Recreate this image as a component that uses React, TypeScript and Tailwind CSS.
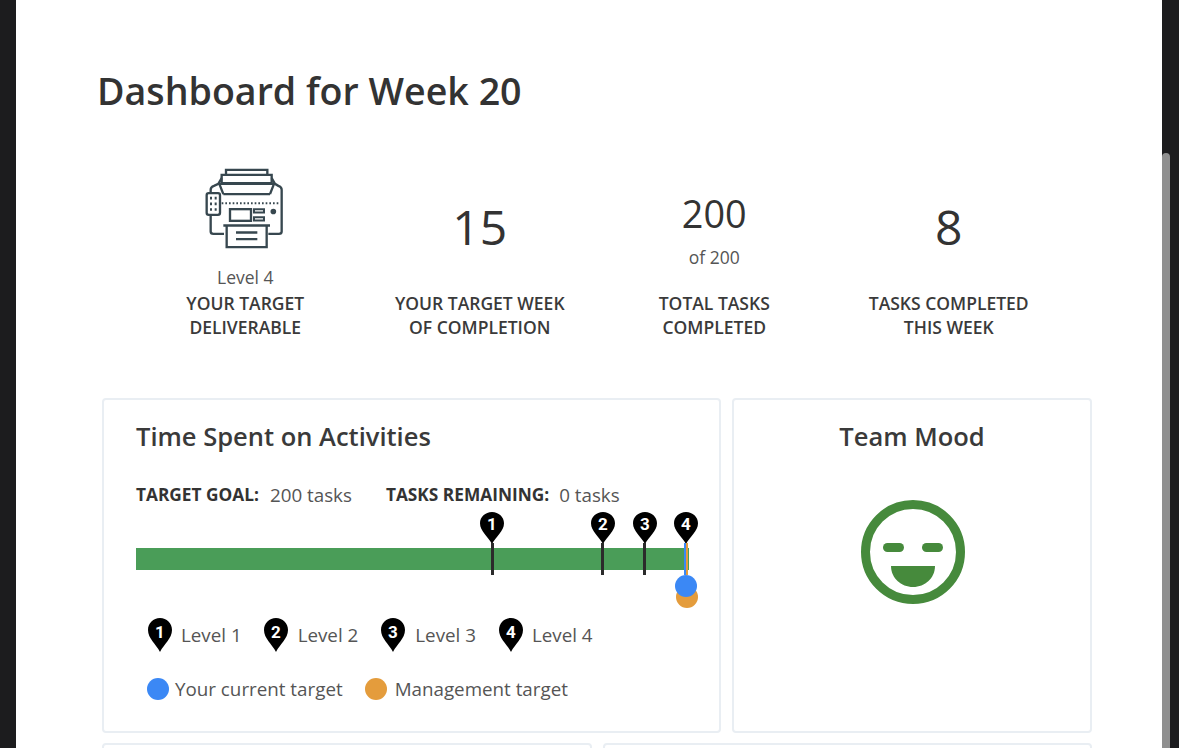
import React from 'react';

const Pin = ({ n, className = 'w-6 h-[34px]' }: { n: number; className?: string }) => (
  <svg viewBox="0 0 24 34" preserveAspectRatio="none" className={className}>
    <path d="M12 0C5.300 0 0 5.300 0 12c0 8.500 8 14 12 22 4-8 12-13.500 12-22C24 5.300 18.700 0 12 0z" fill="#000" />
    <text x="12" y="19.500" textAnchor="middle" fill="#fff" fontSize="17" fontWeight="700" fontFamily="Roboto">{n}</text>
  </svg>
);

const PrinterIcon = () => (
  <svg viewBox="45 25 240 245" className="w-[80px] h-[82px]" fill="none" stroke="#37474f" strokeWidth="7">
    <path d="M108 30h124v15H108zM95 45h150v25H95z" />
    <path d="M85 72h170M100 103h140M88 72l12 31M252 72l-12 31" />
    <path d="M95 55L85 72 72 78q-10 3-10 12v10M62 165v50q0 7 8 7h32" />
    <path d="M245 55l10 17 10 6q10 3 10 12v125q0 7-8 7h-32" />
    <rect x="50" y="100" width="40" height="65" rx="6" fill="#fff" />
    <path d="M60 115h6M74 115h6M60 132h6M74 132h6M60 149h6M74 149h6" strokeWidth="8" />
    <path d="M95 130h175" strokeDasharray="5 6" strokeWidth="6" />
    <rect x="120" y="148" width="63" height="35" />
    <path d="M192 148h30v10h-30zM192 172h30v10h-30z" strokeWidth="6" />
    <circle cx="250" cy="155" r="5" fill="#37474f" />
    <path d="M100 197h140M110 197v65h120v-65M138 218h64M138 238h64" />
  </svg>
);

const Stat = ({ top, line1, line2 }: { top: React.ReactNode; line1: string; line2: string }) => (
  <div className="flex flex-col items-center">
    <div className="h-[142px] flex flex-col items-center justify-end">{top}</div>
    <div className="mt-[2px] text-[17.500px] leading-6 font-semibold text-[#3a3a3a] text-center">
      <div>{line1}</div>
      <div>{line2}</div>
    </div>
  </div>
);

const App: React.FC = () => {
  return (
    <div className="h-[748px] w-[1179px] overflow-hidden bg-[#1c1c1e] flex font-['Open_Sans',sans-serif]">
      <div className="ml-4 w-[1146px] h-[748px] bg-white pl-[82px] pt-[65px] text-[#333]">
        <h1 className="-ml-px text-[37.600px] leading-[52px] font-semibold text-[#333]">Dashboard for Week 20</h1>

        <div className="ml-[30px] mt-[30px] grid grid-cols-[234.500px_234.500px_234.500px_234.500px]">
          <Stat
            top={
              <>
                <PrinterIcon />
                <div className="mt-[15px] text-[17.500px] leading-6 text-[#555]">Level 4</div>
              </>
            }
            line1="YOUR TARGET"
            line2="DELIVERABLE"
          />
          <Stat
            top={<div className="text-[48px] leading-[66px] mb-[29px] text-[#333]">15</div>}
            line1="YOUR TARGET WEEK"
            line2="OF COMPLETION"
          />
          <Stat
            top={
              <div className="mb-[20px] flex flex-col items-center">
                <div className="text-[37.800px] leading-[50px] text-[#333]">200</div>
                <div className="mt-[6px] text-[17.500px] leading-6 text-[#555]">of 200</div>
              </div>
            }
            line1="TOTAL TASKS"
            line2="COMPLETED"
          />
          <Stat
            top={<div className="text-[48px] leading-[66px] mb-[29px] text-[#333]">8</div>}
            line1="TASKS COMPLETED"
            line2="THIS WEEK"
          />
        </div>

        <div className="mt-[59px] ml-1 flex gap-[11px]">
          <div className="w-[619px] h-[335px] shrink-0 rounded border-2 border-[#e9eef3] pl-[32px] pt-[19px]">
            <h2 className="text-[25.500px] leading-[34px] font-semibold text-[#3a3a3a]">Time Spent on Activities</h2>
            <div className="mt-[29px] flex text-[18.800px] leading-[26px] text-[#555]">
              <span className="font-bold text-[17.300px] text-[#333] mr-[11px]">TARGET GOAL:</span>
              <span className="mr-[34px]">200 tasks</span>
              <span className="font-bold text-[17.300px] text-[#333] mr-[10px]">TASKS REMAINING:</span>
              <span>0 tasks</span>
            </div>
            <div className="relative mt-[40px] h-[22px] w-[553px] bg-[#4a9d58]">
              <div className="absolute left-[344px] top-[-36px]"><Pin n={1} className="w-6 h-[32px]" /></div>
              <div className="absolute left-[355px] top-[-5px] h-[32px] w-[2.500px] bg-[#2b2b2b]" />
              <div className="absolute left-[454.500px] top-[-36px]"><Pin n={2} className="w-6 h-[32px]" /></div>
              <div className="absolute left-[465px] top-[-5px] h-[32px] w-[2.500px] bg-[#2b2b2b]" />
              <div className="absolute left-[496.500px] top-[-36px]"><Pin n={3} className="w-6 h-[32px]" /></div>
              <div className="absolute left-[507px] top-[-5px] h-[32px] w-[2.500px] bg-[#2b2b2b]" />
              <div className="absolute left-[538px] top-[-36px]"><Pin n={4} className="w-6 h-[32px]" /></div>
              <div className="absolute left-[548px] top-[-5px] h-[32px] w-[1.500px] bg-[#3b88f5]" />
              <div className="absolute left-[549.500px] top-[-5px] h-[32px] w-[2.500px] bg-[#e49c3c]" />
              <div className="absolute left-[540px] top-[38px] h-[22px] w-[22px] rounded-full bg-[#e49c3c]" />
              <div className="absolute left-[539px] top-[27px] h-[22px] w-[22px] rounded-full bg-[#3b88f5]" />
            </div>
            <div className="mt-[48px] ml-[12px] flex items-center text-[18.800px] leading-[26px] text-[#555]">
              <Pin n={1} />
              <span className="ml-[9px] mr-[22px]">Level 1</span>
              <Pin n={2} />
              <span className="ml-[10px] mr-[23px]">Level 2</span>
              <Pin n={3} />
              <span className="ml-[10px] mr-[23px]">Level 3</span>
              <Pin n={4} />
              <span className="ml-[9px]">Level 4</span>
            </div>
            <div className="mt-[24px] ml-[11px] flex items-center text-[18.800px] leading-[26px] text-[#555]">
              <span className="h-[22px] w-[22px] rounded-full bg-[#3b88f5]" />
              <span className="ml-[6px] mr-[22px]">Your current target</span>
              <span className="h-[22px] w-[22px] rounded-full bg-[#e49c3c]" />
              <span className="ml-[8px]">Management target</span>
            </div>
          </div>

          <div className="w-[360px] h-[335px] shrink-0 rounded border-2 border-[#e9eef3] pt-[19px] flex flex-col items-center">
            <h2 className="text-[25.500px] leading-[34px] font-semibold text-[#3a3a3a]">Team Mood</h2>
            <svg viewBox="0 0 104 104" className="mt-[47px] ml-px w-[104px] h-[104px]">
              <circle cx="52" cy="52" r="47.500" fill="none" stroke="#468a3c" strokeWidth="9" />
              <rect x="22" y="43" width="21" height="9" rx="4.500" fill="#468a3c" />
              <rect x="61" y="43" width="21" height="9" rx="4.500" fill="#468a3c" />
              <path d="M30 66h44c0 12-10 21-22 21s-22-9-22-21z" fill="#468a3c" />
            </svg>
          </div>
        </div>

        <div className="mt-[10px] ml-1 flex gap-[11px]">
          <div className="w-[490px] h-[100px] shrink-0 rounded border-2 border-[#e9eef3]" />
          <div className="w-[489px] h-[100px] shrink-0 rounded border-2 border-[#e9eef3]" />
        </div>
      </div>
      <div className="w-2 h-[748px] pt-[153px]">
        <div className="h-[595px] w-2 rounded-t bg-[#8f8f8f]" />
      </div>
    </div>
  );
};

export default App;
